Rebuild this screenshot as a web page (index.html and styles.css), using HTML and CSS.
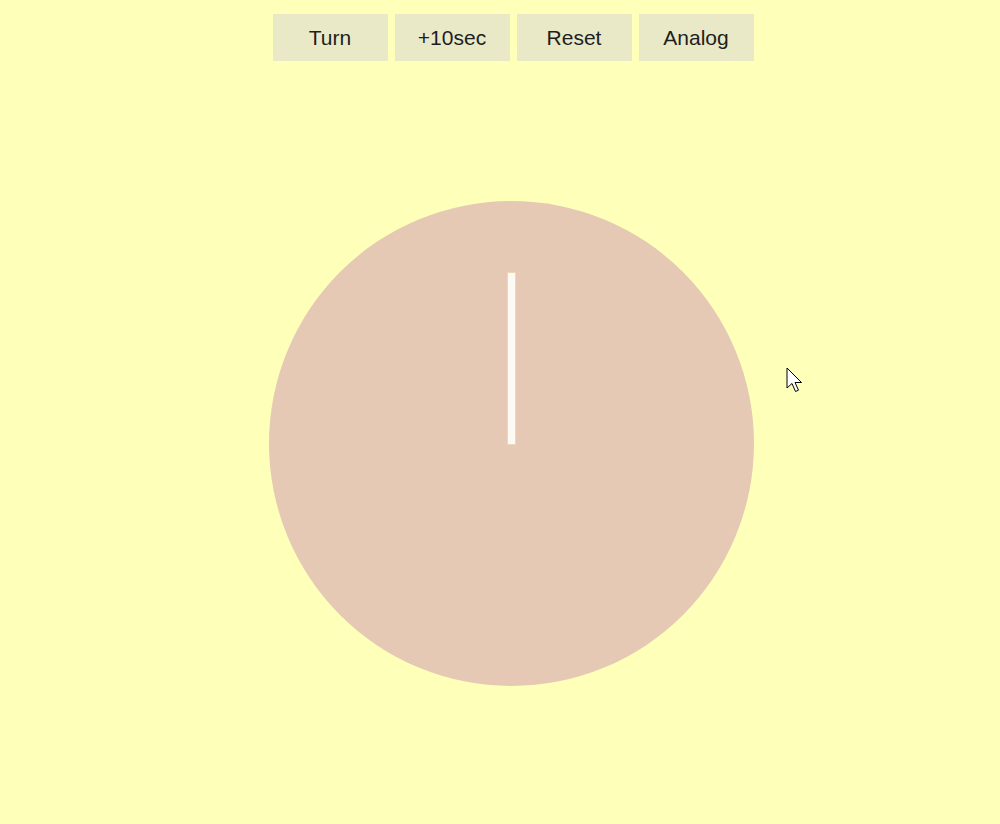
FILE: index.html
```html
<!DOCTYPE html>
<html>
<head>
<meta charset="utf-8">
<link rel="stylesheet" href="styles.css">
</head>
<body>
<div class="page">
  <div class="toolbar">
    <button class="btn">Turn</button>
    <button class="btn">+10sec</button>
    <button class="btn">Reset</button>
    <button class="btn">Analog</button>
  </div>
  <div class="clock">
    <div class="hand"></div>
  </div>
</div>
<svg class="cursor" width="20" height="28" viewBox="0 0 20 28">
  <path d="M1 1 L1 21 L6 16.5 L9.5 24.5 L12.5 23.2 L9 15.5 L15.5 15.5 Z" fill="#fff" stroke="#000" stroke-width="1" stroke-linejoin="miter"/>
</svg>
</body>
</html>
```

FILE: styles.css
```css
html, body {
  margin: 0;
  padding: 0;
  background: #feffb9;
  width: 1000px;
  height: 824px;
  overflow: hidden;
}
.page {
  display: flex;
  flex-direction: column;
  align-items: center;
  padding-left: 22px;
  padding-top: 14px;
  font-family: "Liberation Sans", Arial, sans-serif;
}
.toolbar {
  display: flex;
  gap: 7px;
  padding-left: 4px;
}
.btn {
  width: 115px;
  height: 47px;
  border: none;
  margin: 0;
  padding: 0;
  background: #e9e9c8;
  color: #1e1e1e;
  font-family: "Liberation Sans", Arial, sans-serif;
  font-size: 21px;
}
.clock {
  margin-top: 140px;
  width: 485px;
  height: 485px;
  border-radius: 50%;
  background: #e5c9b4;
  display: flex;
  justify-content: center;
  padding-top: 72px;
  box-sizing: border-box;
}
.hand {
  width: 7px;
  height: 171px;
  background: #fdfaf4;
  box-shadow: 0 0 0 1px #f0d6b8;
}
.cursor {
  position: absolute;
  left: 786px;
  top: 367px;
}
```
